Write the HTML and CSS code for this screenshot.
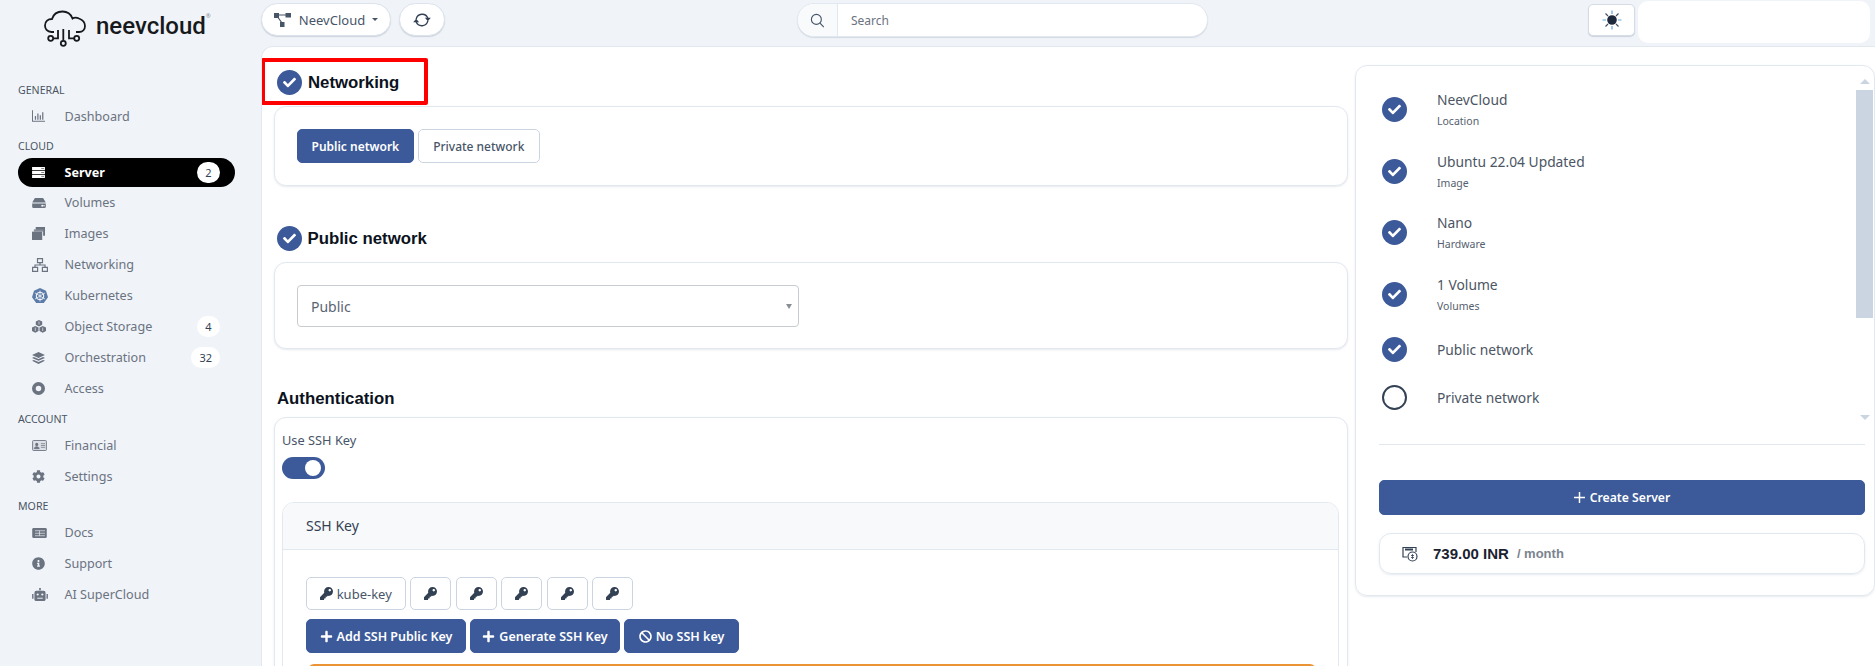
FILE: index.html
```html
<!DOCTYPE html>
<html lang="en">
<head>
    <meta charset="UTF-8">
    <meta name="viewport" content="width=device-width, initial-scale=1.0">
    <title>Create Server</title>
    <link rel="stylesheet" href="styles.css">
</head>
<body>
    <svg class="defs" width="0" height="0">
        <symbol id="i-check" viewBox="0 0 512 512"><path d="M173.898 439.404l-166.4-166.4c-9.997-9.997-9.997-26.206 0-36.204l36.203-36.204c9.997-9.998 26.207-9.998 36.204 0L192 312.69 432.095 72.596c9.997-9.997 26.207-9.997 36.204 0l36.203 36.204c9.997 9.997 9.997 26.206 0 36.204l-294.4 294.401c-9.998 9.997-26.207 9.997-36.204-.001z"/></symbol>
        <symbol id="i-key" viewBox="0 0 512 512"><path d="M512 176.001C512 273.203 433.202 352 336 352c-11.22 0-22.19-1.062-32.827-3.069l-24.012 27.014A23.999 23.999 0 0 1 261.223 384H224v40c0 13.255-10.745 24-24 24h-40v40c0 13.255-10.745 24-24 24H24c-13.255 0-24-10.745-24-24v-78.059c0-6.365 2.529-12.47 7.029-16.971l161.802-161.802C163.108 213.814 160 195.271 160 176 160 78.798 238.797.001 335.999 0 433.488-.001 512 78.511 512 176.001zM336 128c0 26.51 21.49 48 48 48s48-21.49 48-48-21.49-48-48-48-48 21.49-48 48z"/></symbol>
        <symbol id="i-plus" viewBox="0 0 448 512"><path d="M416 208H272V64c0-17.67-14.33-32-32-32h-32c-17.67 0-32 14.33-32 32v144H32c-17.67 0-32 14.33-32 32v32c0 17.67 14.33 32 32 32h144v144c0 17.67 14.33 32 32 32h32c17.67 0 32-14.33 32-32V304h144c17.67 0 32-14.33 32-32v-32c0-17.67-14.33-32-32-32z"/></symbol>
        <symbol id="i-ban" viewBox="0 0 512 512"><path d="M256 8C119.034 8 8 119.033 8 256s111.034 248 248 248 248-111.034 248-248S392.967 8 256 8zm130.108 117.892c65.448 65.448 70 165.481 20.677 235.637L150.47 105.216c70.204-49.356 170.226-44.735 235.638 20.676zM125.892 386.108c-65.448-65.448-70-165.481-20.677-235.637L361.53 406.784c-70.203 49.356-170.226 44.736-235.638-20.676z"/></symbol>
    </svg>

    <div class="app">
        <header class="topbar">
            <div class="brand">
                <svg class="brand-icon" viewBox="0 0 42 38" fill="none" stroke="#17191c" stroke-width="1.8">
                    <path d="M10 22H7.5C3 22 1 18.5 1 15.5 1 11.5 4 9 8 9 9.5 4 14 1.5 18.5 1.5c5 0 8.5 3 10 7 1.5-1 4.5-1 6.5 0 4 1.500 6 4.500 6 7.500 0 3.500-2.500 6-6 6h-3"/>
                    <path d="M9.200 28.300H14V20M19.300 30.500V19M30.200 28.300H25V20"/>
                    <circle cx="6.700" cy="28.300" r="2.500"/>
                    <circle cx="19.300" cy="33.300" r="2.500"/>
                    <circle cx="32.700" cy="28.300" r="2.500"/>
                </svg>
                <span class="brand-name">neevcloud</span>
                <span class="brand-reg">®</span>
            </div>
            <button class="pill-btn project-btn">
                <svg class="project-icon" viewBox="0 0 17 14" fill="#475569">
                    <path d="M0 0h5v5H0zM11.500 0H17v4.500h-5.500zM6 9h4.500v5H6z"/>
                    <path d="M4 2h8M3 3l5 7" stroke="#475569" stroke-width="1.200" fill="none"/>
                </svg>
                <span>NeevCloud</span>
                <span class="caret"></span>
            </button>
            <button class="pill-btn refresh-btn">
                <svg viewBox="0 0 20 20" width="18" height="18" fill="none" stroke="#334155" stroke-width="1.500">
                    <path d="M3.500 9A6.800 6.800 0 0 1 16.500 8M16.500 11A6.800 6.800 0 0 1 3.500 12"/>
                    <path d="M13.200 7.500h6.600l-3.300 4zM0.200 12.500h6.600l-3.300-4z" fill="#334155" stroke="none"/>
                </svg>
            </button>
            <div class="search">
                <span class="search-icon">
                    <svg viewBox="0 0 16 16" width="15" height="15" fill="none" stroke="#475569" stroke-width="1.200">
                        <circle cx="6.800" cy="6.800" r="5.300"/>
                        <path d="M10.700 10.700l4 4.300"/>
                    </svg>
                </span>
                <span class="search-text">Search</span>
            </div>
            <button class="theme-btn">
                <svg viewBox="0 0 20 20" width="20" height="20" fill="none" stroke="#64a5d8" stroke-width="1.200">
                    <path d="M10 0.500v3.500M10 16v3.500M0.500 10H4M16 10h3.500"/>
                    <path d="M3.500 3.500L6 6M14 14l2.500 2.500M3.500 16.500L6 14M14 6l2.500-2.500" stroke="#475569"/>
                    <circle cx="10" cy="10" r="4.800" fill="#1e293b" stroke="none"/>
                </svg>
            </button>
            <div class="user-box"></div>
        </header>

        <nav class="sidebar">
            <div class="nav-label">GENERAL</div>
            <a class="nav-item" href="#">
                <svg width="13" height="12" viewBox="0 0 16 14" fill="#6b7280"><path d="M0 0h1.200v12.800H16V14H0zM3.500 7h1.500v4.500H3.500zM6.500 4h1.500v7.500H6.500zM9.500 6h1.500v5.500H9.500zM12.500 2.500H14v9h-1.500z"/></svg>
                <span>Dashboard</span>
            </a>
            <div class="nav-label">CLOUD</div>
            <a class="nav-item active" href="#">
                <svg width="13" height="11" viewBox="0 0 14 12" fill="#fff"><path d="M0 0h14v3.500H0zM0 4.300h14v3.400H0zM0 8.500h14V12H0z"/><path d="M10 1.700h3M10 6h3M10 10.200h3" stroke="#777" stroke-width="1"/></svg>
                <span>Server</span>
                <span class="badge">2</span>
            </a>
            <a class="nav-item" href="#">
                <svg width="14" height="10" viewBox="0 0 15 11" fill="#6b7280"><path d="M3 0h9l3 5H0zM0 6h15v3.500a1.500 1.500 0 0 1-1.500 1.500h-12A1.500 1.500 0 0 1 0 9.500z"/><circle cx="11" cy="8.500" r="1" fill="#fff"/><circle cx="13" cy="8.500" r=".8" fill="#fff"/></svg>
                <span>Volumes</span>
            </a>
            <a class="nav-item" href="#">
                <svg width="13" height="13" viewBox="0 0 14 14" fill="#6b7280"><path d="M4 0h10v9.500h-2V3H4z"/><path d="M2 2.500h10V5H2z" opacity=".8"/><path d="M0 5h11v9H0z"/></svg>
                <span>Images</span>
            </a>
            <a class="nav-item" href="#">
                <svg width="16" height="14" viewBox="0 0 16 14" fill="none" stroke="#6b7280" stroke-width="1.200"><path d="M5.500.6h5v4h-5zM.6 9.400h5v4h-5zM10.400 9.400h5v4h-5zM8 4.600v2.400M3 9.400V7h10v2.400"/></svg>
                <span>Networking</span>
            </a>
            <a class="nav-item" href="#">
                <svg width="16" height="16" viewBox="0 0 16 16"><path d="M8 0l6 2.800 2 6.500-4.200 5.700H4.200L0 9.300l2-6.500z" fill="#5c7ba8"/><circle cx="8" cy="8" r="3.800" fill="none" stroke="#fff" stroke-width="1"/><path d="M8 2.500v11M3 5l10 6M13 5L3 11" stroke="#fff" stroke-width=".7"/></svg>
                <span>Kubernetes</span>
            </a>
            <a class="nav-item" href="#">
                <svg width="14" height="13" viewBox="0 0 14 13" fill="#6b7280"><path d="M7 0l3.200 1.600v3.200L7 6.400 3.800 4.800V1.600zM3.300 6L6.500 7.600v3.400L3.300 12.800 0 11V7.600zM10.700 6L14 7.600V11l-3.300 1.800L7.500 11V7.600z"/><path d="M7 1.500v3M3.300 7.500v3.500M10.700 7.500v3.500" stroke="#fff" stroke-width=".6"/></svg>
                <span>Object Storage</span>
                <span class="badge">4</span>
            </a>
            <a class="nav-item" href="#">
                <svg width="13" height="12" viewBox="0 0 14 13" fill="#6b7280"><path d="M7 0l7 3.200L7 6.400 0 3.200zM2 5.400l5 2.300 5-2.300 2 1-7 3.100-7-3.100zM2 8.600l5 2.300 5-2.300 2 1L7 13 0 9.600z"/></svg>
                <span>Orchestration</span>
                <span class="badge">32</span>
            </a>
            <a class="nav-item" href="#">
                <svg width="13" height="13" viewBox="0 0 14 14" fill="none" stroke="#6b7280" stroke-width="4"><circle cx="7" cy="7" r="5"/></svg>
                <span>Access</span>
            </a>
            <div class="nav-label">ACCOUNT</div>
            <a class="nav-item" href="#">
                <svg width="15" height="11" viewBox="0 0 16 12"><rect x=".5" y=".5" width="15" height="11" rx="1" fill="#dde1e7" stroke="#6b7280"/><circle cx="5" cy="4.800" r="1.700" fill="#6b7280"/><path d="M2.300 9.500c0-3 5.400-3 5.400 0zM9.500 4h4.500M9.500 6h4.500M9.500 8h4.500" fill="#6b7280" stroke="#6b7280" stroke-width=".8"/></svg>
                <span>Financial</span>
            </a>
            <a class="nav-item" href="#">
                <svg width="13" height="13" viewBox="0 0 512 512" fill="#6b7280"><path d="M487.4 315.7l-42.6-24.6c4.3-23.2 4.3-47 0-70.2l42.6-24.6c4.9-2.8 7.1-8.6 5.5-14-11.1-35.6-30-67.8-54.7-94.6-3.8-4.1-10-5.1-14.8-2.3L380.8 110c-17.9-15.4-38.5-27.3-60.8-35.1V25.8c0-5.6-3.9-10.5-9.4-11.7-36.7-8.2-74.3-7.8-109.2 0-5.5 1.2-9.4 6.1-9.4 11.7V75c-22.2 7.900-42.8 19.800-60.8 35.100L88.700 85.500c-4.900-2.800-11-1.900-14.800 2.300-24.700 26.700-43.600 58.900-54.700 94.600-1.700 5.400.6 11.200 5.500 14L67.300 221c-4.300 23.200-4.300 47 0 70.200l-42.600 24.600c-4.900 2.800-7.100 8.600-5.500 14 11.100 35.600 30 67.800 54.700 94.600 3.800 4.100 10 5.100 14.800 2.300l42.600-24.600c17.900 15.400 38.500 27.300 60.800 35.100v49.200c0 5.600 3.900 10.500 9.400 11.700 36.700 8.200 74.300 7.800 109.200 0 5.500-1.200 9.400-6.100 9.400-11.700v-49.200c22.200-7.900 42.800-19.800 60.800-35.100l42.600 24.600c4.900 2.800 11 1.900 14.800-2.300 24.700-26.700 43.600-58.900 54.700-94.600 1.500-5.500-.7-11.300-5.600-14.100zM256 336c-44.100 0-80-35.900-80-80s35.900-80 80-80 80 35.900 80 80-35.900 80-80 80z"/></svg>
                <span>Settings</span>
            </a>
            <div class="nav-label">MORE</div>
            <a class="nav-item" href="#">
                <svg width="15" height="10" viewBox="0 0 16 11" fill="#6b7280"><rect width="16" height="11" rx="1.500"/><path d="M3 3h11M3 5.800h11M3 8.500h11M8 3v5.500" stroke="#f0f4f9" stroke-width=".7"/></svg>
                <span>Docs</span>
            </a>
            <a class="nav-item" href="#">
                <svg width="13" height="13" viewBox="0 0 512 512" fill="#6b7280"><path d="M256 8C119.043 8 8 119.083 8 256c0 136.997 111.043 248 248 248s248-111.003 248-248C504 119.083 392.957 8 256 8zm0 110c23.196 0 42 18.804 42 42s-18.804 42-42 42-42-18.804-42-42 18.804-42 42-42zm56 254c0 6.627-5.373 12-12 12h-88c-6.627 0-12-5.373-12-12v-24c0-6.627 5.373-12 12-12h12v-64h-12c-6.627 0-12-5.373-12-12v-24c0-6.627 5.373-12 12-12h64c6.627 0 12 5.373 12 12v100h12c6.627 0 12 5.373 12 12v24z"/></svg>
                <span>Support</span>
            </a>
            <a class="nav-item" href="#">
                <svg width="16" height="13" viewBox="0 0 17 14" fill="#6b7280"><rect x="2.500" y="3" width="12" height="11" rx="2"/><path d="M0 6.500h1.500v5H0zM15.500 6.500H17v5h-1.500zM8 0h1v3H8z"/><circle cx="8.500" cy="1" r="1"/><circle cx="6" cy="7" r="1.200" fill="#f0f4f9"/><circle cx="11" cy="7" r="1.200" fill="#f0f4f9"/><path d="M5.500 10.500h6v1h-6z" fill="#f0f4f9"/></svg>
                <span>AI SuperCloud</span>
            </a>
        </nav>

        <main class="content">
            <div class="form-col">
                <div class="heading-mark">
                    <span class="check-dot"><svg><use href="#i-check"/></svg></span>
                    <h3 class="title">Networking</h3>
                </div>
                <section class="card network-card">
                    <button class="btn btn-primary">Public network</button>
                    <button class="btn btn-light">Private network</button>
                </section>

                <div class="heading">
                    <span class="check-dot"><svg><use href="#i-check"/></svg></span>
                    <h3 class="title">Public network</h3>
                </div>
                <section class="card select-card">
                    <div class="select">
                        <span>Public</span>
                        <span class="select-arrow"></span>
                    </div>
                </section>

                <h3 class="title auth-title">Authentication</h3>
                <section class="card auth-card">
                    <div class="field-label">Use SSH Key</div>
                    <div class="toggle"><span class="toggle-knob"></span></div>
                    <div class="inner-card">
                        <div class="inner-head">SSH Key</div>
                        <div class="inner-body">
                            <div class="key-row">
                                <button class="key-btn key-named"><svg class="key-icon"><use href="#i-key"/></svg>kube-key</button>
                                <button class="key-btn"><svg class="key-icon"><use href="#i-key"/></svg></button>
                                <button class="key-btn"><svg class="key-icon"><use href="#i-key"/></svg></button>
                                <button class="key-btn"><svg class="key-icon"><use href="#i-key"/></svg></button>
                                <button class="key-btn"><svg class="key-icon"><use href="#i-key"/></svg></button>
                                <button class="key-btn"><svg class="key-icon"><use href="#i-key"/></svg></button>
                            </div>
                            <div class="action-row">
                                <button class="btn btn-primary btn-icon btn-add"><svg class="btn-svg"><use href="#i-plus"/></svg>Add SSH Public Key</button>
                                <button class="btn btn-primary btn-icon btn-generate"><svg class="btn-svg"><use href="#i-plus"/></svg>Generate SSH Key</button>
                                <button class="btn btn-primary btn-icon btn-none"><svg class="btn-svg"><use href="#i-ban"/></svg>No SSH key</button>
                            </div>
                            <div class="alert"></div>
                        </div>
                    </div>
                </section>
            </div>

            <aside class="summary">
                <div class="summary-scroll">
                    <ul class="summary-list">
                        <li class="summary-item">
                            <span class="check-dot"><svg><use href="#i-check"/></svg></span>
                            <div><div class="item-name">NeevCloud</div><div class="item-sub">Location</div></div>
                        </li>
                        <li class="summary-item">
                            <span class="check-dot"><svg><use href="#i-check"/></svg></span>
                            <div><div class="item-name">Ubuntu 22.04 Updated</div><div class="item-sub">Image</div></div>
                        </li>
                        <li class="summary-item">
                            <span class="check-dot"><svg><use href="#i-check"/></svg></span>
                            <div><div class="item-name">Nano</div><div class="item-sub">Hardware</div></div>
                        </li>
                        <li class="summary-item">
                            <span class="check-dot"><svg><use href="#i-check"/></svg></span>
                            <div><div class="item-name">1 Volume</div><div class="item-sub">Volumes</div></div>
                        </li>
                        <li class="summary-item single">
                            <span class="check-dot"><svg><use href="#i-check"/></svg></span>
                            <div class="item-name">Public network</div>
                        </li>
                        <li class="summary-item single">
                            <span class="empty-dot"></span>
                            <div class="item-name">Private network</div>
                        </li>
                    </ul>
                    <div class="scrollbar">
                        <span class="arrow-up"></span>
                        <span class="scroll-thumb"></span>
                        <span class="arrow-down"></span>
                    </div>
                </div>
                <div class="summary-foot">
                    <button class="btn btn-primary create-btn"><svg class="create-svg" viewBox="0 0 12 12" stroke="#fff" stroke-width="1.600"><path d="M6 0v12M0 6h12"/></svg>Create Server</button>
                    <div class="price">
                        <svg class="price-icon" viewBox="0 0 16 16" fill="none" stroke="#334155" stroke-width="1.200">
                            <path d="M5 11H1V1.500h13V6"/>
                            <path d="M3 3.500h8" stroke-width="2"/>
                            <circle cx="10.500" cy="10.500" r="4.500"/>
                            <path d="M10.500 8v5M9 9.500h3M9 11.500h3" stroke-width=".8"/>
                        </svg>
                        <span class="price-value">739.00 INR</span>
                        <span class="price-unit">/ month</span>
                    </div>
                </div>
            </aside>
        </main>
    </div>
</body>
</html>
```

FILE: styles.css
```css
* {
    box-sizing: border-box;
}
body {
    margin: 0;
    height: 100vh;
    overflow: hidden;
    background-color: #f0f4f9;
    color: #475569;
    font-family: "Noto Sans", Arial, sans-serif;
    font-size: 14px;
}
button {
    font-family: inherit;
    cursor: pointer;
}
.defs {
    position: absolute;
}
.app {
    display: grid;
    grid-template-columns: 261px 1fr;
    grid-template-rows: 46px 1fr;
    height: 100vh;
}

/* top bar */
.topbar {
    grid-column: 1 / 3;
    display: flex;
    align-items: flex-start;
}
.brand {
    width: 261px;
    height: 46px;
    display: flex;
    padding-left: 44px;
    padding-top: 10px;
    flex: none;
}
.brand-icon {
    width: 42px;
    height: 38px;
}
.brand-name {
    margin-left: 10px;
    font-family: Roboto, Arial, sans-serif;
    font-weight: 500;
    font-size: 24px;
    line-height: 32px;
    color: #17191c;
}
.brand-reg {
    font-size: 6px;
    line-height: 12px;
    color: #8a8f96;
}
.pill-btn {
    height: 33px;
    margin-top: 3px;
    display: flex;
    align-items: center;
    justify-content: center;
    background-color: white;
    border: 1px solid #dde3ec;
    border-radius: 17px;
    box-shadow: 0 1px 1px rgba(100,116,139,0.25);
    color: #475569;
}
.project-btn {
    width: 130px;
    font-size: 13px;
}
.project-icon {
    width: 17px;
    height: 14px;
    margin-right: 8px;
}
.caret {
    margin-left: 7px;
    border-top: 3px solid #475569;
    border-left: 3px solid transparent;
    border-right: 3px solid transparent;
}
.refresh-btn {
    width: 46px;
    margin-left: 8px;
    padding: 0;
}
.search {
    width: 411px;
    height: 34px;
    margin-top: 3px;
    margin-left: 352px;
    display: flex;
    align-items: center;
    background-color: white;
    border: 1px solid #e2e8f0;
    border-radius: 17px;
    box-shadow: 0 1px 1px rgba(100,116,139,0.2);
    overflow: hidden;
}
.search-icon {
    width: 40px;
    height: 100%;
    display: flex;
    align-items: center;
    justify-content: center;
    background-color: #f8fafc;
    border-right: 1px solid #e2e8f0;
}
.search-text {
    margin-left: 13px;
    font-size: 12px;
    color: #6b7280;
}
.theme-btn {
    width: 47px;
    height: 32px;
    margin-top: 4px;
    margin-left: 380px;
    padding: 0;
    display: flex;
    align-items: center;
    justify-content: center;
    background-color: white;
    border: 1px solid #d5dce6;
    border-radius: 5px;
    box-shadow: 0 1px 1px rgba(100,116,139,0.25);
}
.user-box {
    width: 232px;
    height: 42px;
    margin-top: 1px;
    margin-left: 3px;
    background-color: white;
    border-radius: 10px;
}

/* sidebar */
.sidebar {
    padding: 36px 26px 0 18px;
}
.nav-label {
    height: 16px;
    line-height: 16px;
    margin: 7.5px 0 4px;
    font-size: 10.6px;
    color: #4b5563;
}
.nav-label:first-child {
    margin: 0 0 3.5px;
}
.nav-item {
    height: 29px;
    margin-bottom: 2px;
    padding: 0 15px 0 14px;
    display: grid;
    grid-template-columns: 32.5px auto 1fr;
    align-items: center;
    font-size: 12.6px;
    color: #6b7280;
    text-decoration: none;
}
.nav-item.active {
    margin-bottom: 1px;
    background-color: black;
    border-radius: 15px;
    color: white;
    font-weight: 700;
}
.badge {
    justify-self: end;
    min-width: 23px;
    height: 21px;
    padding: 0 8px;
    display: flex;
    align-items: center;
    justify-content: center;
    background-color: white;
    border-radius: 11px;
    font-size: 11px;
    font-weight: 400;
    color: #334155;
}

/* main */
.content {
    display: grid;
    grid-template-columns: 1074px 520px;
    column-gap: 7px;
    padding: 11px 0 0 12px;
    background-color: white;
    border-top: 1px solid #e2e8f0;
    border-left: 1px solid #e2e8f0;
    border-top-left-radius: 12px;
    overflow: hidden;
}
.card {
    background-color: white;
    border: 1px solid #e2e8f0;
    border-radius: 12px;
    box-shadow: 0 1px 2px rgba(100,116,139,0.15);
}
.title {
    margin: 0;
    font-family: "Liberation Sans", Arial, sans-serif;
    font-size: 16.8px;
    font-weight: 700;
    color: #0b1220;
}
.check-dot {
    width: 25px;
    height: 25px;
    display: flex;
    align-items: center;
    justify-content: center;
    flex: none;
    background-color: #3c5a99;
    border-radius: 50%;
}
.check-dot svg {
    width: 13px;
    height: 13px;
    fill: white;
}
.heading-mark {
    width: 167px;
    height: 47px;
    margin-left: -13px;
    margin-bottom: 1px;
    padding: 2px 0 0 12px;
    display: flex;
    align-items: center;
    gap: 6px;
    border: 4px solid #f00;
    border-radius: 2px;
}
.heading {
    margin-top: 40px;
    margin-bottom: 11px;
    margin-left: 2.5px;
    display: flex;
    align-items: center;
    gap: 6px;
}
.network-card {
    height: 80px;
    padding: 22px;
    display: flex;
    gap: 4px;
}
.btn {
    height: 34px;
    padding: 0 13.5px;
    border-radius: 5px;
    font-size: 12px;
    font-weight: 600;
}
.btn-primary {
    background-color: #3c5a99;
    border: 1px solid #3c5a99;
    color: white;
}
.btn-light {
    padding: 0 14.5px;
    background-color: white;
    border: 1px solid #cbd5e1;
    color: #475569;
    font-weight: 500;
}
.select-card {
    height: 87px;
    padding: 22px;
}
.select {
    width: 502px;
    height: 42px;
    padding: 0 6px 0 13px;
    display: flex;
    align-items: center;
    justify-content: space-between;
    border: 1px solid #c8ccd0;
    border-radius: 4px;
    color: #5b6472;
}
.select-arrow {
    border-top: 5px solid #8a8f96;
    border-left: 3px solid transparent;
    border-right: 3px solid transparent;
}
.auth-title {
    margin: 40px 0 8px 3px;
    height: 20px;
    line-height: 20px;
}
.auth-card {
    height: 400px;
    padding: 13px 8px 0 7px;
}
.field-label {
    height: 18px;
    line-height: 18px;
    font-size: 12.8px;
}
.toggle {
    width: 43px;
    height: 22px;
    margin-top: 8px;
    padding: 3px 4px;
    display: flex;
    justify-content: flex-end;
    background-color: #3c5a99;
    border-radius: 11px;
}
.toggle-knob {
    width: 16px;
    height: 16px;
    background-color: white;
    border-radius: 50%;
}
.inner-card {
    margin-top: 23px;
    height: 300px;
    border: 1px solid #e2e8f0;
    border-radius: 12px;
    overflow: hidden;
}
.inner-head {
    height: 47px;
    line-height: 46px;
    padding-left: 23px;
    background-color: #f8f9fa;
    border-bottom: 1px solid #e2e8f0;
    font-size: 14px;
    color: #334155;
}
.inner-body {
    padding: 27px 23px;
}
.key-row {
    display: flex;
    gap: 4.5px;
}
.key-btn {
    width: 41px;
    height: 33px;
    padding: 0;
    display: flex;
    align-items: center;
    justify-content: center;
    gap: 4px;
    background-color: white;
    border: 1px solid #cbd5e1;
    border-radius: 5px;
    font-size: 13px;
    color: #475569;
}
.key-named {
    width: 99.5px;
}
.key-icon {
    width: 13px;
    height: 13px;
    fill: #334155;
}
.action-row {
    margin-top: 9px;
    display: flex;
    gap: 4px;
}
.btn-icon {
    padding: 0;
    display: flex;
    align-items: center;
    justify-content: center;
    gap: 4px;
    font-size: 12.5px;
}
.btn-add {
    width: 160px;
}
.btn-generate {
    width: 150px;
}
.btn-none {
    width: 115px;
}
.btn-svg {
    width: 13px;
    height: 13px;
    fill: white;
}
.alert {
    margin: 11px 0 0 2px;
    width: 1008px;
    height: 60px;
    background-color: #fff3d6;
    border: 2px solid #ea9436;
    border-radius: 6px;
}

/* right panel */
.summary {
    height: 531px;
    margin-top: 7px;
    padding-top: 13px;
    border: 1px solid #e2e8f0;
    border-radius: 12px;
    box-shadow: 0 1px 2px rgba(100,116,139,0.15);
}
.summary-scroll {
    display: flex;
    width: 517px;
}
.summary-list {
    flex: 1;
    margin: 0;
    padding: 0;
    list-style: none;
}
.summary-item {
    height: 61.5px;
    padding-left: 26px;
    display: flex;
    align-items: center;
    gap: 30px;
}
.summary-item.single {
    height: 48.5px;
}
.item-name {
    font-size: 13.8px;
    line-height: 19px;
    color: #4b5563;
}
.item-sub {
    margin-top: 5px;
    font-size: 10.5px;
    line-height: 15px;
    color: #55606f;
}
.empty-dot {
    width: 25px;
    height: 25px;
    flex: none;
    border: 2px solid #334155;
    border-radius: 50%;
}
.scrollbar {
    width: 17px;
    height: 351px;
    display: flex;
    flex-direction: column;
    align-items: center;
}
.arrow-up {
    border-bottom: 5px solid #cbd5e1;
    border-left: 5px solid transparent;
    border-right: 5px solid transparent;
}
.scroll-thumb {
    width: 17px;
    height: 228px;
    margin-top: 6px;
    background-color: #cbd5e1;
}
.arrow-down {
    margin-top: 97px;
    border-top: 5px solid #cbd5e1;
    border-left: 5px solid transparent;
    border-right: 5px solid transparent;
}
.summary-foot {
    width: 486px;
    margin-left: 23px;
    margin-top: 14px;
    padding-top: 35px;
    border-top: 1px solid #e2e8f0;
}
.create-btn {
    width: 100%;
    height: 35px;
    display: flex;
    align-items: center;
    justify-content: center;
    gap: 5px;
    font-size: 12.2px;
}
.create-svg {
    width: 11px;
    height: 11px;
}
.price {
    height: 41px;
    margin-top: 18px;
    padding-left: 22px;
    display: flex;
    align-items: center;
    border: 1px solid #e2e8f0;
    border-radius: 12px;
    box-shadow: 0 1px 2px rgba(100,116,139,0.15);
    font-family: "Liberation Sans", Arial, sans-serif;
    font-weight: 700;
}
.price-icon {
    width: 16px;
    height: 16px;
    margin-right: 15px;
}
.price-value {
    font-size: 15px;
    color: #1a2230;
}
.price-unit {
    margin-left: 8px;
    font-size: 13px;
    color: #7b8490;
}
```
